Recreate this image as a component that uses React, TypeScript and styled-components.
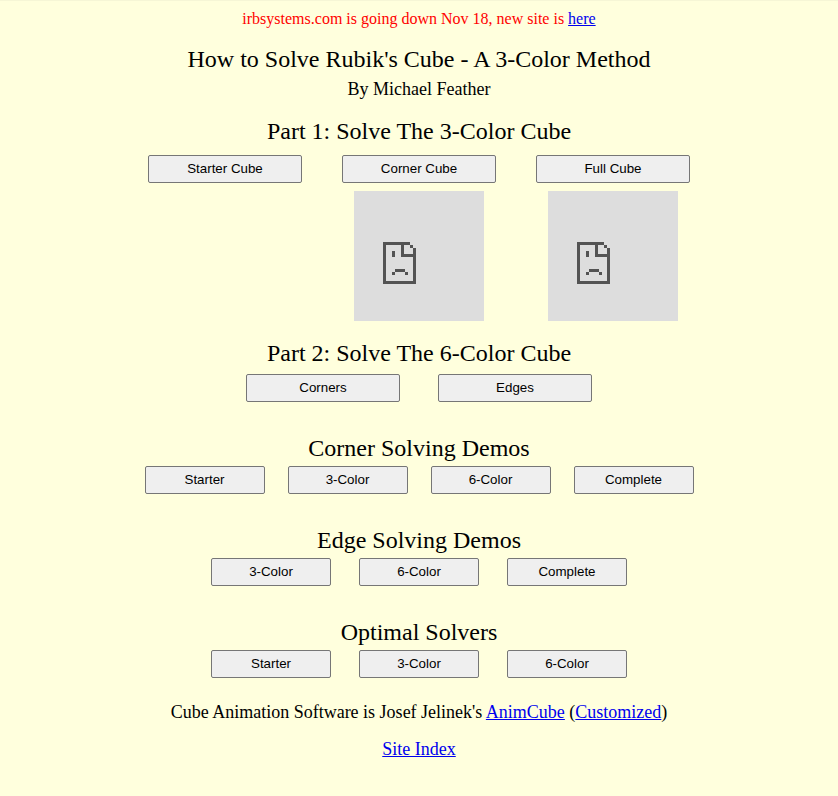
import React from "react";
import styled, { createGlobalStyle } from "styled-components";

const Global = createGlobalStyle`
  body { margin: 0; background: #ffffdd; color: #000; font-family: "Liberation Serif", "Times New Roman", serif; }
`;
const Page = styled.main`
  box-sizing: border-box;
  height: 796px;
  border-top: 1px solid #f6f6d6;
  display: flex;
  flex-direction: column;
  align-items: center;
`;
const Line = styled.div<{ $size: number; $top?: number; $h: number; $color?: string }>`
  font-size: ${(p) => p.$size}px;
  line-height: ${(p) => p.$h}px;
  margin-top: ${(p) => p.$top ?? 0}px;
  color: ${(p) => p.$color ?? "#000"};
  white-space: nowrap;
`;
const Link = styled.a`
  color: #0000ee;
  text-decoration: underline;
`;
const Row = styled.div<{ $gap: number; $top: number }>`
  display: flex;
  gap: ${(p) => p.$gap}px;
  margin-top: ${(p) => p.$top}px;
`;
const Button = styled.button<{ $w: number }>`
  box-sizing: border-box;
  width: ${(p) => p.$w}px;
  height: 28px;
  padding: 0 6px 1px;
  border: 1px solid #767676;
  border-radius: 2px;
  background: #efefef;
  color: #000;
  font: 13.333px/normal "Liberation Sans", Arial, sans-serif;
`;
const Column = styled.div`
  display: flex;
  flex-direction: column;
  align-items: center;
  gap: 8px;
  height: 166px;
`;
const Frame = styled.div`
  display: flow-root;
  width: 130px;
  height: 130px;
  background: #dddddd;
  svg { display: block; margin: 51px 0 0 29px; }
`;

const SadPage = () => (
  <Frame>
    <svg width="33" height="42" viewBox="0 0 33 42" shapeRendering="crispEdges" fill="#535353">
      {/* page outline with folded corner */}
      <path d="M0 0H27V3H21V12H30V6H33V42H0ZM3 3V39H30V15H18V3ZM27 3H30V6H27Z" fillRule="evenodd" />
      {/* eye and frown */}
      <path d="M9 9H12V15H9ZM12 27H22V30H12ZM9 30H12V33H9ZM22 30H25V33H22Z" />
    </svg>
  </Frame>
);

const Buttons = ({ labels, w, gap, top }: { labels: string[]; w: number; gap: number; top: number }) => (
  <Row $gap={gap} $top={top}>
    {labels.map((l) => <Button key={l} $w={w}>{l}</Button>)}
  </Row>
);

export default function App() {
  return (
    <>
      <Global />
      <Page>
        <Line $size={16} $h={18} $top={9} $color="#ff0000">
          irbsystems.com is going down Nov 18, new site is <Link href="#">here</Link>
        </Line>
        <Line $size={24} $h={28} $top={17}>How to Solve Rubik's Cube - A 3-Color Method</Line>
        <Line $size={18} $h={20} $top={6}>By Michael Feather</Line>
        <Line $size={24} $h={28} $top={18}>Part 1: Solve The 3-Color Cube</Line>
        <Row $gap={40} $top={10}>
          <Column><Button $w={154}>Starter Cube</Button></Column>
          <Column><Button $w={154}>Corner Cube</Button><SadPage /></Column>
          <Column><Button $w={154}>Full Cube</Button><SadPage /></Column>
        </Row>
        <Line $size={24} $h={28} $top={18}>Part 2: Solve The 6-Color Cube</Line>
        <Buttons labels={["Corners", "Edges"]} w={154} gap={38} top={7} />
        <Line $size={24} $h={28} $top={32}>Corner Solving Demos</Line>
        <Buttons labels={["Starter", "3-Color", "6-Color", "Complete"]} w={120} gap={23} top={4} />
        <Line $size={24} $h={28} $top={32}>Edge Solving Demos</Line>
        <Buttons labels={["3-Color", "6-Color", "Complete"]} w={120} gap={28} top={4} />
        <Line $size={24} $h={28} $top={32}>Optimal Solvers</Line>
        <Buttons labels={["Starter", "3-Color", "6-Color"]} w={120} gap={28} top={4} />
        <Line $size={18} $h={20} $top={24}>
          Cube Animation Software is Josef Jelinek's <Link href="#">AnimCube</Link> (<Link href="#">Customized</Link>)
        </Line>
        <Line $size={18} $h={20} $top={17}><Link href="#">Site Index</Link></Line>
      </Page>
    </>
  );
}
